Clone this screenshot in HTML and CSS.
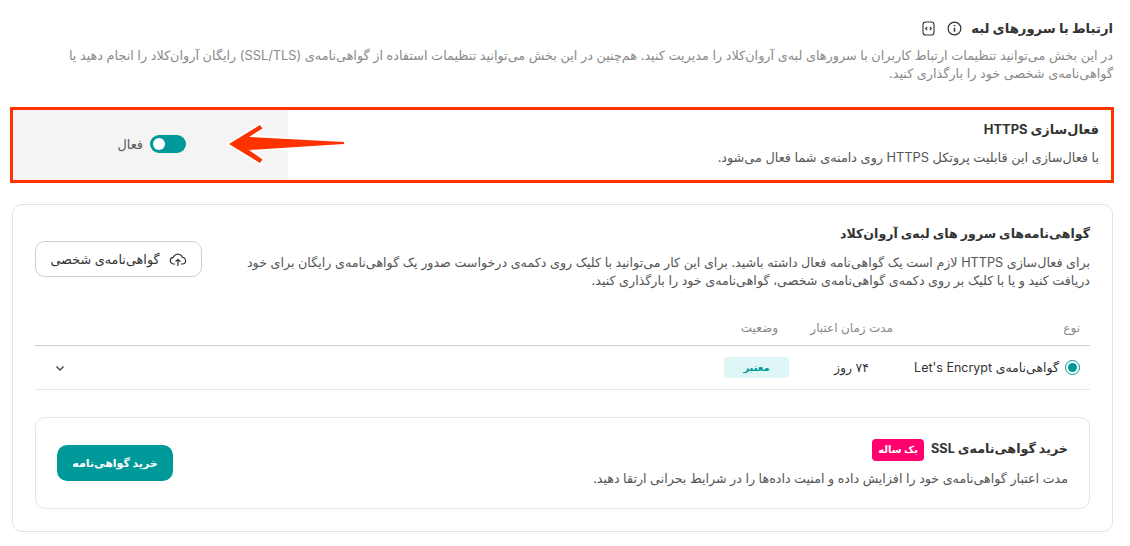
FILE: index.html
```html
<!DOCTYPE html>
<html lang="fa" dir="rtl">
<head>
<meta charset="utf-8">
<title>ارتباط با سرورهای لبه</title>
<link rel="stylesheet" href="styles.css">
</head>
<body>
<main class="page">
  <header class="head">
    <div class="head-title">
      <h1>ارتباط با سرورهای لبه</h1>
      <svg class="ic" width="15" height="15" viewBox="0 0 16 16" fill="none" stroke="#333" stroke-width="1.300"><circle cx="8" cy="8" r="6.800"/><path d="M8 7.200v4.200M8 4.200v1.400" stroke-width="1.600"/></svg>
      <svg class="ic" width="13" height="15" viewBox="0 0 13 15" fill="none" stroke="#333" stroke-width="1.100"><rect x="1" y="1" width="11" height="13" rx="2.800"/><path d="M5.200 6 3.700 7.500 5.200 9M7.800 6l1.500 1.500L7.800 9"/></svg>
    </div>
    <p class="head-desc">در این بخش می‌توانید تنظیمات ارتباط کاربران با سرورهای لبه‌ی آروان‌کلاد را مدیریت کنید. هم‌چنین در این بخش می‌توانید تنظیمات استفاده از گواهی‌نامه‌ی (SSL/TLS) رایگان آروان‌کلاد را انجام دهید یا گواهی‌نامه‌ی شخصی خود را بارگذاری کنید.</p>
  </header>

  <section class="https">
    <div class="https-text">
      <h2>فعال‌سازی HTTPS</h2>
      <p>با فعال‌سازی این قابلیت پروتکل HTTPS روی دامنه‌ی شما فعال می‌شود.</p>
    </div>
    <div class="https-side">
      <span class="toggle"><span class="knob"></span></span>
      <span class="toggle-label">فعال</span>
    </div>
    <svg class="arrow" width="126" height="50" viewBox="0 0 126 50"><path d="M8 26 39 7l2.500 3.500L28 19l95 5v2l-95 6 13.500 9.500L39 45z" fill="#ff3300" stroke="#fff" stroke-width="4" stroke-linejoin="round" paint-order="stroke"/></svg>
  </section>

  <section class="card">
    <div class="card-top">
      <div class="card-intro">
        <h2>گواهی‌نامه‌های سرور های لبه‌ی آروان‌کلاد</h2>
        <p>برای فعال‌سازی HTTPS لازم است یک گواهی‌نامه فعال داشته باشید. برای این کار می‌توانید با کلیک روی دکمه‌ی درخواست صدور یک گواهی‌نامه‌ی رایگان برای خود دریافت کنید و یا با کلیک بر روی دکمه‌ی گواهی‌نامه‌ی شخصی، گواهی‌نامه‌ی خود را بارگذاری کنید.</p>
      </div>
      <button class="btn-outline" type="button">
        <svg width="18" height="18" viewBox="0 0 18 18" fill="none" stroke="#333" stroke-width="1.200" stroke-linecap="round" stroke-linejoin="round"><path d="M5.600 14H4.800A3.300 3.300 0 0 1 4.400 7.400 4.700 4.700 0 0 1 13.400 7.400 3.300 3.300 0 0 1 13.200 14h-.8"/><path d="M9 15.500V9.500M6.900 11.400 9 9.300l2.100 2.100"/></svg>
        <span>گواهی‌نامه‌ی شخصی</span>
      </button>
    </div>

    <div class="table">
      <div class="row row-head">
        <span class="col-type">نوع</span>
        <span class="col-time">مدت زمان اعتبار</span>
        <span class="col-status">وضعیت</span>
      </div>
      <div class="row row-body">
        <span class="col-type type-cell"><span class="radio"><span class="radio-dot"></span></span><span>گواهی‌نامه‌ی Let's Encrypt</span></span>
        <span class="col-time">۷۴ روز</span>
        <span class="col-status"><span class="badge">معتبر</span></span>
        <svg class="chev" width="12" height="12" viewBox="0 0 12 12" fill="none" stroke="#444" stroke-width="1.400"><path d="M2.500 4.500 6 8l3.500-3.500"/></svg>
      </div>
    </div>

    <div class="buy">
      <div class="buy-text">
        <h3>خرید گواهی‌نامه‌ی SSL <span class="tag">یک ساله</span></h3>
        <p>مدت اعتبار گواهی‌نامه‌ی خود را افزایش داده و امنیت داده‌ها را در شرایط بحرانی ارتقا دهید.</p>
      </div>
      <button class="btn-primary" type="button">خرید گواهی‌نامه</button>
    </div>
  </section>
</main>
</body>
</html>
```
FILE: styles.css
```css
* { box-sizing: border-box; }
html, body { margin: 0; padding: 0; }
body {
  background: #fff;
  color: #333;
  font-family: Inter, "DejaVu Sans", sans-serif;
  font-size: 12.8px;
  width: 1130px;
  height: 546px;
  overflow: hidden;
}
.page { padding: 18px 17px 0 17px; }
h1, h2, h3, p { margin: 0; }
.head-title { display: flex; align-items: center; height: 20px; }
h1 { font-size: 13.2px; font-weight: 700; color: #333; margin-left: 9px; }
.ic { flex: none; }
.ic + .ic { margin-right: 12px; }
.head-desc { margin-top: 9px; color: #8a8a8a; line-height: 18px; padding-left: 28px; }

.https {
  position: relative;
  display: flex;
  justify-content: space-between;
  margin: 24px -1px 0 -7px;
  height: 76px;
  border: 3px solid #ff3300;
}
.https-text { padding: 11px 12px 0 0; }
.https h2 { font-size: 12.9px; font-weight: 700; line-height: 18px; color: #333; }
.https p { margin-top: 10px; line-height: 18px; color: #555; }
.https-side {
  width: 275px;
  background: #f4f4f4;
  display: flex;
  align-items: center;
  gap: 7px;
  padding-right: 102px;
  padding-bottom: 2px;
}
.toggle-label { color: #555; }
.toggle { width: 36px; height: 18px; border-radius: 9px; background: #009999; display: block; position: relative; flex: none; }
.knob { position: absolute; left: 3px; top: 3px; width: 12px; height: 12px; border-radius: 50%; background: #fff; }
.arrow { position: absolute; left: 208px; top: 8px; }

.card {
  margin: 21px 0 0 -5px;
  height: 328px;
  border: 1px solid #e3e3e3;
  border-radius: 10px;
  padding: 15px 22px 0;
}
.card-top { display: flex; justify-content: space-between; align-items: flex-start; }
.card-intro { width: 860px; }
.card h2 { font-size: 12.6px; font-weight: 700; line-height: 28px; color: #333; }
.card-intro p { margin-top: 6px; line-height: 18px; color: #555; font-size: 12.68px; }
.btn-outline {
  margin-top: 21px;
  width: 167px; height: 36px;
  display: flex; align-items: center; justify-content: center; gap: 9px;
  background: #fff; border: 1px solid #cfcfcf; border-radius: 10px;
  font: inherit; color: #333;
}
.table { margin-top: 20px; }
.row { display: flex; align-items: center; position: relative; padding-right: 10px; }
.row-head { height: 36px; border-bottom: 1px solid #cfcfcf; color: #888; font-size: 12px; }
.row-body { height: 44px; border-bottom: 1px solid #e6e6e6; color: #333; font-size: 12.5px; }
.col-type { width: 187px; flex: none; }
.col-time { width: 115px; flex: none; }
.row-body .col-time { padding-right: 24px; }
.col-status { width: 80px; flex: none; }
.type-cell { display: flex; align-items: center; gap: 6px; white-space: nowrap; }
.radio { width: 15px; height: 15px; border: 1px solid #009999; border-radius: 50%; display: flex; align-items: center; justify-content: center; flex: none; }
.radio-dot { width: 9px; height: 9px; background: #009999; border-radius: 50%; }
.badge { display: block; width: 65px; height: 21px; line-height: 20px; text-align: center; background: #def6f6; color: #009999; border-radius: 4px; font-size: 10px; font-weight: 700; margin-right: -11px; }
.chev { position: absolute; left: 19px; top: 16px; }

.buy {
  margin-top: 27px;
  height: 92px;
  border: 1px solid #e6e6e6;
  border-radius: 10px;
  padding: 0 21px 0 21px;
  display: flex; align-items: center; justify-content: space-between;
}
.buy-text { padding-bottom: 3px; }
.buy h3 { font-size: 12.7px; font-weight: 700; color: #333; line-height: 22px; }
.buy p { margin-top: 10px; color: #555; font-size: 12.67px; }
.tag { display: inline-block; background: #ff006e; color: #fff; font-size: 10px; font-weight: 700; line-height: 21px; height: 22px; padding: 0 6px; border-radius: 4px; margin-right: 4px; }
.btn-primary {
  width: 116px; height: 36px;
  background: #009999; color: #fff; border: 0; border-radius: 10px;
  font: inherit; font-size: 11px; font-weight: 700;
}
```
